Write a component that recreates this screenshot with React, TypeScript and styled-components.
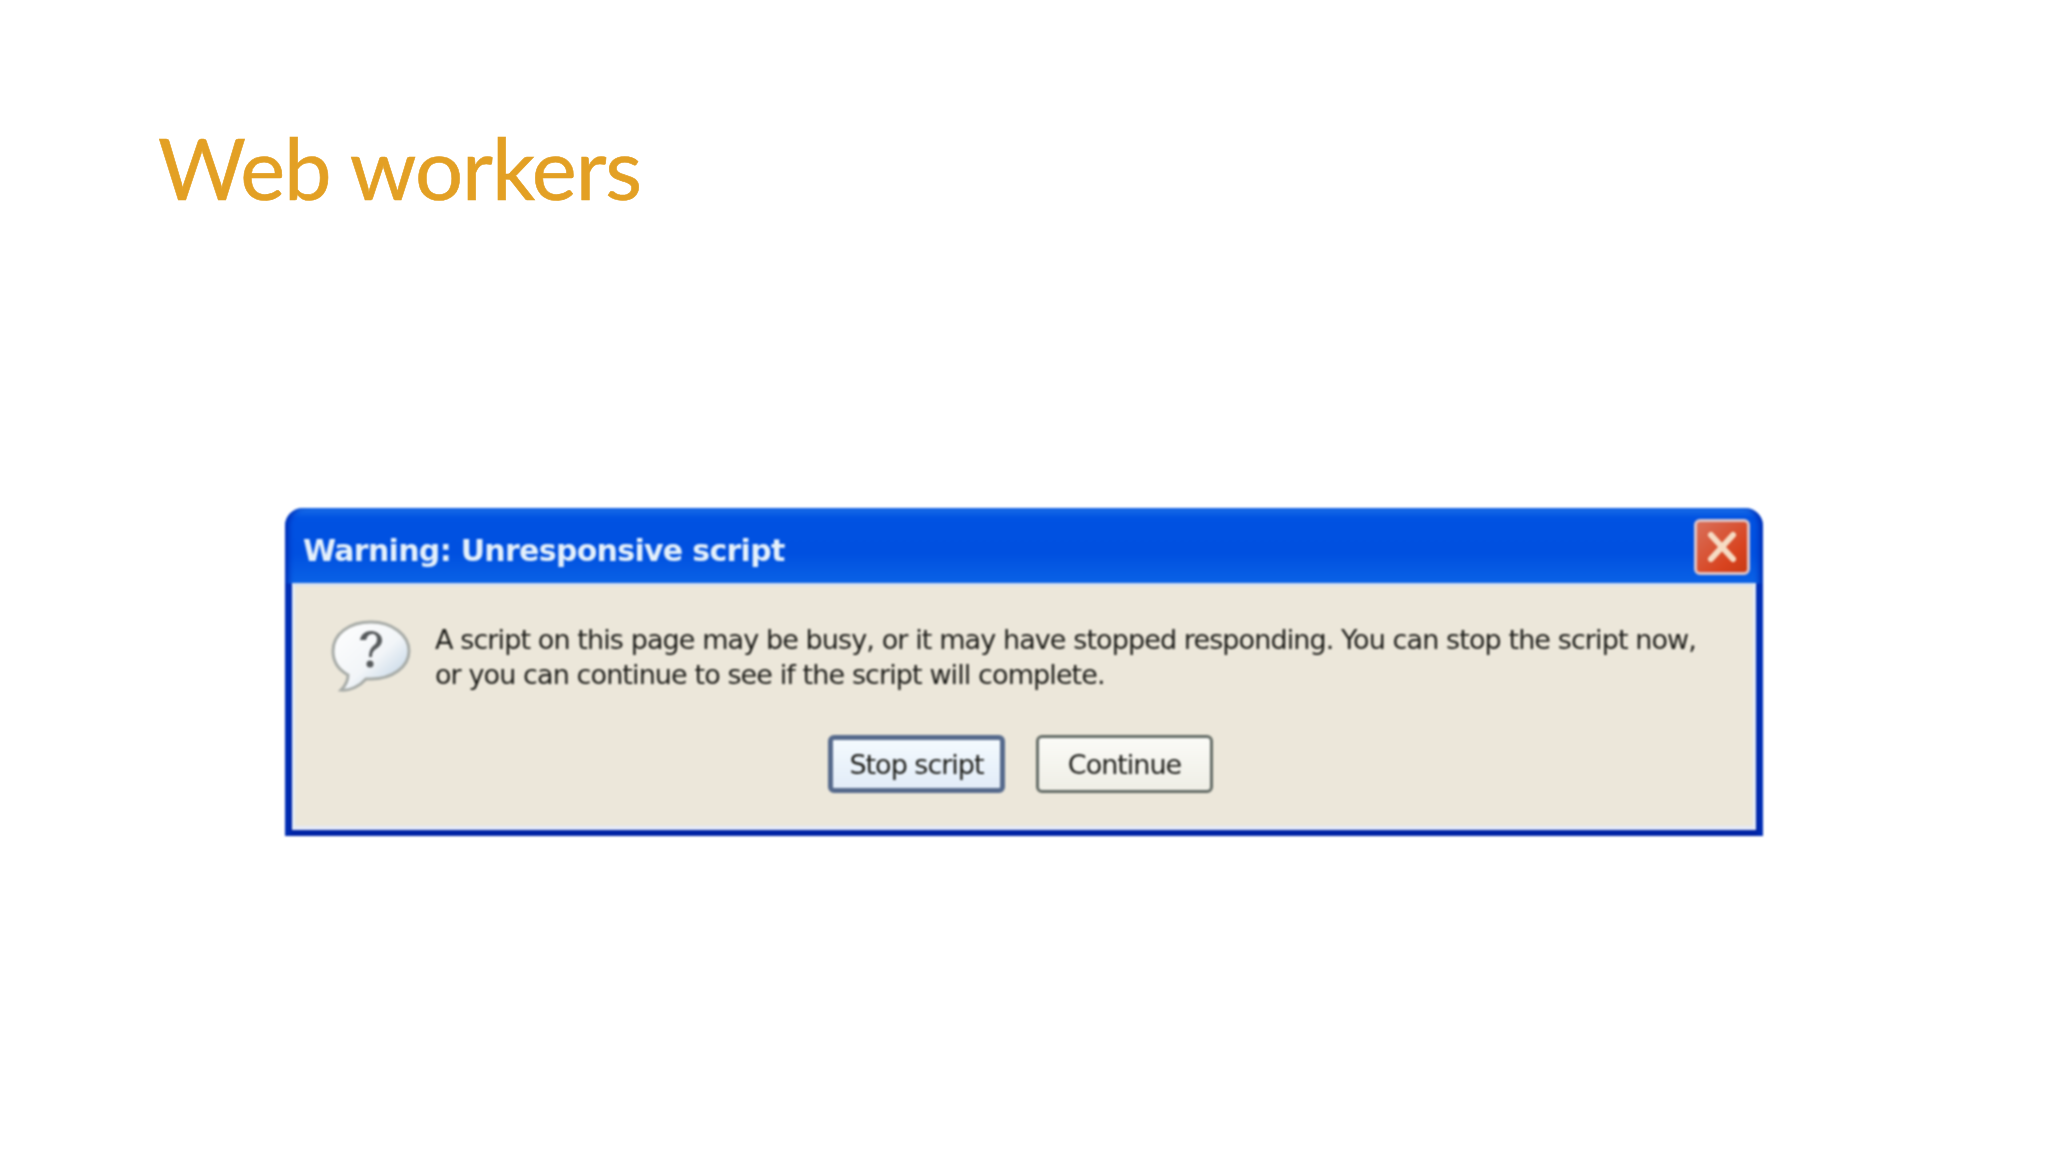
import React from 'react';
import styled, { createGlobalStyle } from 'styled-components';

const GlobalStyle = createGlobalStyle`
  html, body {
    margin: 0;
    background: #ffffff;
  }
`;

const Slide = styled.div`
  width: 2048px;
  height: 1152px;
  box-sizing: border-box;
  padding: 114px 285px 0 158px;
  overflow: hidden;
`;

const Title = styled.h1`
  margin: 0;
  font-family: Lato, sans-serif;
  font-weight: 400;
  font-size: 85px;
  line-height: 106px;
  letter-spacing: -1px;
  color: #e3a024;
  -webkit-text-stroke: 0.6px #e3a024;
`;

const Dialog = styled.div`
  width: 1478px;
  height: 328px;
  margin: 288px 0 0 127px;
  display: flex;
  flex-direction: column;
  box-sizing: border-box;
  border-radius: 18px 18px 0 0;
  padding: 0 7px 6px 7px;
  background: linear-gradient(#1a6ee8 0, #0052e2 10px, #0050e0 45px, #0a62e6 75px, #0030b4 76px, #0024a4 100%);
  box-shadow: inset 7px 0 5px -3px #0030b8, inset -7px 0 5px -3px #0030b8;
  filter: blur(0.8px);
`;

const TitleBar = styled.div`
  height: 75px;
  flex: none;
  display: flex;
  align-items: center;
  justify-content: space-between;
  padding: 0 6px 0 11px;
`;

const Caption = styled.span`
  font-family: 'DejaVu Sans', sans-serif;
  font-weight: 700;
  font-size: 30px;
  letter-spacing: -0.7px;
  color: #e4f0fb;
  margin-top: 9px;
`;

const CloseButton = styled.button`
  width: 56px;
  height: 56px;
  margin-top: 2px;
  padding: 0;
  display: flex;
  align-items: center;
  justify-content: center;
  box-sizing: border-box;
  border: 3px solid #dcc4c8;
  border-radius: 6px;
  background: linear-gradient(135deg, #d9705a, #d8431f 70%, #c93a15);
`;

const Body = styled.div`
  flex: 1;
  display: flex;
  flex-direction: column;
  box-sizing: border-box;
  padding: 34px 0 0 35px;
  background: #ece7da;
  border-top: 3px solid #d9e2ee;
  border-left: 3px solid #e6eef6;
  border-right: 3px solid #e6eef6;
  border-bottom: 4px solid #e6eaf6;
`;

const MessageRow = styled.div`
  display: flex;
  align-items: flex-start;
  gap: 23px;
`;

const Message = styled.p`
  margin: 2px 0 0;
  font-family: 'DejaVu Sans', sans-serif;
  font-size: 27px;
  line-height: 35px;
  letter-spacing: -0.9px;
  color: #1c1c18;
  white-space: nowrap;
`;

const ButtonRow = styled.div`
  display: flex;
  gap: 31px;
  margin: 41px 0 0 498px;
`;

const DialogButton = styled.button<{ $primary?: boolean }>`
  width: 177px;
  height: 58px;
  padding: 0;
  box-sizing: border-box;
  font-family: 'DejaVu Sans', sans-serif;
  font-size: 27px;
  letter-spacing: -1px;
  color: #1c1c18;
  border-radius: 6px;
  border: ${(p) => (p.$primary ? '5px solid #566a8c' : '3px solid #646c66')};
  background: ${(p) => (p.$primary ? 'linear-gradient(#f4fafe, #e2ecf8)' : 'linear-gradient(#fbfbf7, #efeee6)')};
`;

const BubbleIcon = () => (
  <svg width="82" height="74" viewBox="0 0 82 74">
    <defs>
      <linearGradient id="bubbleFill" x1="0" y1="0" x2="1" y2="1">
        <stop offset="0" stopColor="#ffffff" />
        <stop offset="0.55" stopColor="#f2f5f8" />
        <stop offset="1" stopColor="#b4cbe0" />
      </linearGradient>
    </defs>
    <path
      d="M41 2C19 2 3 14 3 31c0 11 6 19 15 24 0 6-3 11-7 15 9 1 19-4 25-11 2 0 3 0 5 0 21 0 38-12 38-28S62 2 41 2Z"
      fill="url(#bubbleFill)"
      stroke="#a8aca8"
      strokeWidth="3"
    />
    <path
      d="M30 20c1-6 6-9 11-9 6 0 11 4 11 9 0 4-2 6-6 9-3 2-4 4-4 8h-3c0-5 1-8 4-11 3-2 4-4 4-7 0-3-2-5-5-5-3 0-5 2-6 6Z"
      fill="#565a5c"
    />
    <circle cx="40" cy="44" r="3.5" fill="#565a5c" />
  </svg>
);

const CloseIcon = () => (
  <svg width="36" height="36" viewBox="0 0 36 36">
    <path d="M7 6L29 30M29 6L7 30" stroke="#f6dcc4" strokeWidth="6" strokeLinecap="round" />
  </svg>
);

const App: React.FC = () => {
  return (
    <>
      <GlobalStyle />
      <Slide>
        <Title>Web workers</Title>
        <Dialog>
          <TitleBar>
            <Caption>Warning: Unresponsive script</Caption>
            <CloseButton>
              <CloseIcon />
            </CloseButton>
          </TitleBar>
          <Body>
            <MessageRow>
              <BubbleIcon />
              <Message>
                A script on this page may be busy, or it may have stopped responding. You can stop the script now,
                <br />
                or you can continue to see if the script will complete.
              </Message>
            </MessageRow>
            <ButtonRow>
              <DialogButton $primary>Stop script</DialogButton>
              <DialogButton>Continue</DialogButton>
            </ButtonRow>
          </Body>
        </Dialog>
      </Slide>
    </>
  );
};

export default App;
